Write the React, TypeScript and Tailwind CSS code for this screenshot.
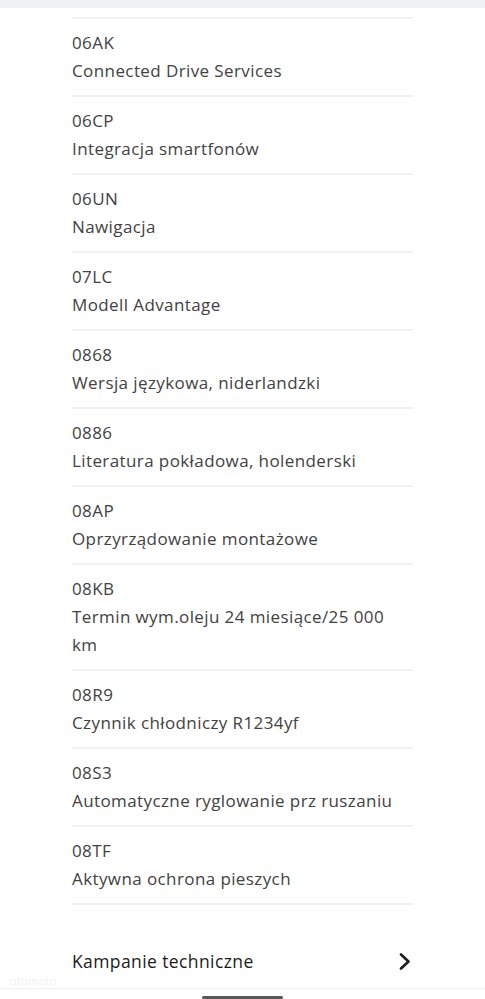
const items: { code: string; name: string }[] = [
  { code: '06AK', name: 'Connected Drive Services' },
  { code: '06CP', name: 'Integracja smartfonów' },
  { code: '06UN', name: 'Nawigacja' },
  { code: '07LC', name: 'Modell Advantage' },
  { code: '0868', name: 'Wersja językowa, niderlandzki' },
  { code: '0886', name: 'Literatura pokładowa, holenderski' },
  { code: '08AP', name: 'Oprzyrządowanie montażowe' },
  { code: '08KB', name: 'Termin wym.oleju 24 miesiące/25 000 km' },
  { code: '08R9', name: 'Czynnik chłodniczy R1234yf' },
  { code: '08S3', name: 'Automatyczne ryglowanie prz ruszaniu' },
  { code: '08TF', name: 'Aktywna ochrona pieszych' },
];

export default function App() {
  return (
    <div
      className="w-[485px] h-[999px] overflow-hidden bg-white flex flex-col"
      style={{ fontFamily: '"Open Sans", "Noto Sans", sans-serif' }}
    >
      {/* top strip */}
      <div className="h-[9px] bg-[#eef2f5]" />

      {/* option list */}
      <div className="ml-[72px] w-[341px] mt-[9px]">
        <div className="h-[2px] bg-[#f1f1f1]" />
        {items.map((item) => (
          <div key={item.code} className="pt-[10px] pb-[10px] border-b-2 border-[#f1f1f1]">
            <div className="text-[17px] leading-[28px] text-[#424242] tracking-[0.4px]">{item.code}</div>
            <div className="text-[17px] leading-[28px] text-[#424242] tracking-[0.4px]">{item.name}</div>
          </div>
        ))}
      </div>

      {/* technical campaigns row */}
      <div className="ml-[72px] w-[341px] mt-[42px] flex items-center justify-between">
        <span className="text-[17.5px] leading-[28px] text-[#1c1c1c] tracking-[0.4px]">Kampanie techniczne</span>
        <svg width="12" height="17" viewBox="0 0 12 17" className="mr-[2px]">
          <path d="M2 1.5 L9.5 8.5 L2 15.5" fill="none" stroke="#1c1c1c" strokeWidth="2.6" strokeLinecap="round" strokeLinejoin="round" />
        </svg>
      </div>

      {/* bottom bar */}
      <div className="relative mt-[13px] flex-1 border-t border-[#f2f2f2]">
        <span className="absolute left-[10px] -top-[16px] text-[11px] text-[#f0f0f0] tracking-wide">otomoto</span>
        <div className="mx-auto mt-[7px] w-[81px] h-[3px] rounded-full bg-[#5a5a5a]" />
      </div>
    </div>
  );
}
